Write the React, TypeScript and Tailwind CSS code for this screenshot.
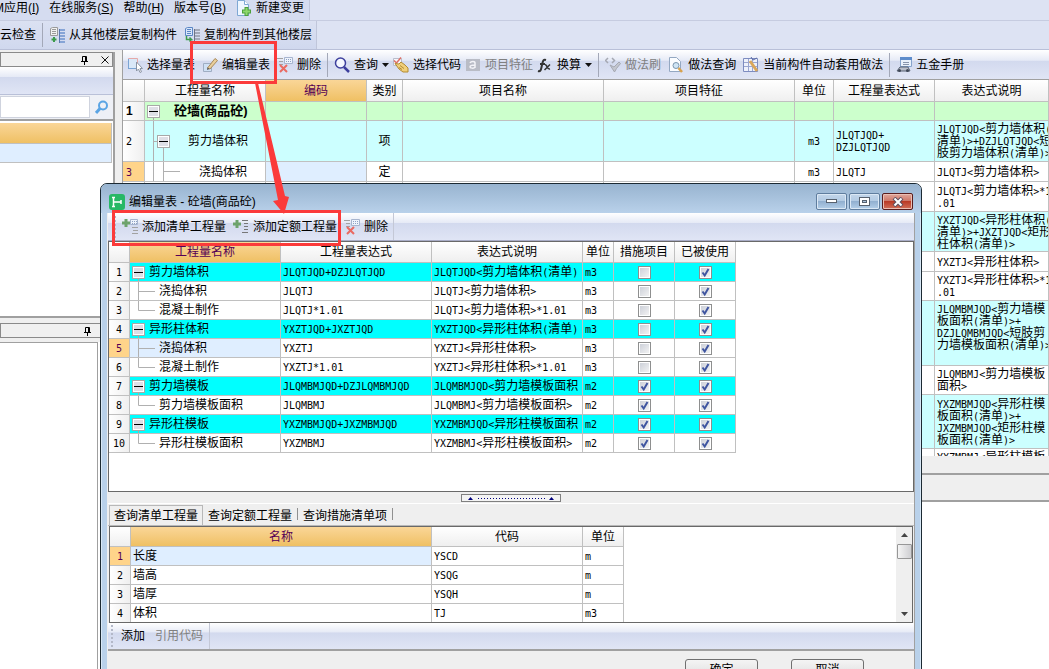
import { Fragment, useState } from 'react'
import type { ReactNode } from 'react'

type Level = 'parent' | 'child' | 'last'

const tableRows: {
  name: string
  level: Level
  code: string
  note: string
  unit: string
  measure: boolean
}[] = [
  { name: '剪力墙体积', level: 'parent', code: 'JLQTJQD+DZJLQTJQD', note: 'JLQTJQD<剪力墙体积(清单)', unit: 'm3', measure: false },
  { name: '浇捣体积', level: 'child', code: 'JLQTJ', note: 'JLQTJ<剪力墙体积>', unit: 'm3', measure: false },
  { name: '混凝土制作', level: 'last', code: 'JLQTJ*1.01', note: 'JLQTJ<剪力墙体积>*1.01', unit: 'm3', measure: false },
  { name: '异形柱体积', level: 'parent', code: 'YXZTJQD+JXZTJQD', note: 'YXZTJQD<异形柱体积(清单)', unit: 'm3', measure: false },
  { name: '浇捣体积', level: 'child', code: 'YXZTJ', note: 'YXZTJ<异形柱体积>', unit: 'm3', measure: false },
  { name: '混凝土制作', level: 'last', code: 'YXZTJ*1.01', note: 'YXZTJ<异形柱体积>*1.01', unit: 'm3', measure: false },
  { name: '剪力墙模板', level: 'parent', code: 'JLQMBMJQD+DZJLQMBMJQD', note: 'JLQMBMJQD<剪力墙模板面积', unit: 'm2', measure: true },
  { name: '剪力墙模板面积', level: 'last', code: 'JLQMBMJ', note: 'JLQMBMJ<剪力墙模板面积>', unit: 'm2', measure: true },
  { name: '异形柱模板', level: 'parent', code: 'YXZMBMJQD+JXZMBMJQD', note: 'YXZMBMJQD<异形柱模板面积', unit: 'm2', measure: true },
  { name: '异形柱模板面积', level: 'last', code: 'YXZMBMJ', note: 'YXZMBMJ<异形柱模板面积>', unit: 'm2', measure: true },
]

// 弹窗遮住的行只保留底色和表达式说明
const restRows = [
  { note: 'JLQTJ<剪力墙体积>*1\n.01', style: 'h-[30px] bg-white' },
  { note: 'YXZTJQD<异形柱体积(\n清单)>+JXZTJQD<矩形\n柱体积(清单)>', style: 'h-[40px] bg-[#ccffff]' },
  { note: 'YXZTJ<异形柱体积>', style: 'h-[20px] bg-white' },
  { note: 'YXZTJ<异形柱体积>*1\n.01', style: 'h-[29px] bg-white' },
  { note: 'JLQMBMJQD<剪力墙模\n板面积(清单)>+\nDZJLQMBMJQD<短肢剪\n力墙模板面积(清单)>\n ', style: 'h-[65px] bg-[#ccffff]' },
  { note: 'JLQMBMJ<剪力墙模板\n面积>', style: 'h-[29px] bg-white' },
  { note: 'YXZMBMJQD<异形柱模\n板面积(清单)>+\nJXZMBMJQD<矩形柱模\n板面积(清单)>', style: 'h-[54px] bg-[#ccffff]' },
  { note: 'YXZMBMJ<异形柱模板\n面积>', style: 'h-[29px] bg-white' },
]

const queryRows = [
  ['长度', 'YSCD', 'm'],
  ['墙高', 'YSQG', 'm'],
  ['墙厚', 'YSQH', 'm'],
  ['体积', 'TJ', 'm3'],
]

const cell = 'border-r border-b border-[#c0c0c0] p-0 overflow-hidden whitespace-nowrap'
const head = `${cell} bg-linear-to-b from-white to-[#efefef] text-center font-normal`
const headActive = `${cell} bg-linear-to-b from-[#fad697] to-[#efc063] text-center font-normal text-[#550055]`
const rowNo = 'bg-linear-to-r from-white to-[#efefef]'
const barSplit =
  'bg-[linear-gradient(to_bottom,#ffffff_0%,#e6eaf6_36%,#d2d9ee_37%,#e0e5f5_100%)]'

// 中文 12px，英文字符半宽
function Code({ text }: { text: string }) {
  return (
    <span className="whitespace-pre">
      {text.split(/([\x20-\x7e]+)/).map((part, i) =>
        i % 2 ? (
          <span key={i} className="font-['DejaVu_Sans_Mono',monospace] text-[10px] leading-[8px]">
            {part}
          </span>
        ) : (
          <Fragment key={i}>{part}</Fragment>
        ),
      )}
    </span>
  )
}

function MinusBox({ x, y }: { x: number; y: number }) {
  return (
    <g>
      <rect x={x + 0.5} y={y + 0.5} width="12" height="12" fill="#fff" stroke="#a8a8a8" />
      <rect x={x + 2} y={y + 2} width="9" height="9" fill="#dedfe6" />
      <path d={`M${x + 2} ${y + 6.5}h9`} stroke="#000" />
    </g>
  )
}

function TreeMark({ level }: { level: Level }) {
  if (level === 'parent') {
    return (
      <svg width="15" height="18" className="shrink-0">
        <path d="M8.5 15v3" stroke="#a8a8a8" />
        <MinusBox x={2} y={3} />
      </svg>
    )
  }
  return (
    <svg width="25" height="18" className="shrink-0" fill="none" stroke="#b0b0b0">
      <path d={level === 'last' ? 'M8.5 0V9.5H25' : 'M8.5 0V18M8.5 9.5H25'} />
    </svg>
  )
}

function CheckBox({ checked, label }: { checked: boolean; label: string }) {
  const [on, setOn] = useState(checked)
  return (
    <span className="grid place-items-center">
      <input
        type="checkbox"
        aria-label={label}
        checked={on}
        onChange={() => setOn(!on)}
        className="col-start-1 row-start-1 size-[13px] appearance-none border border-[#8e8f8f] bg-linear-to-br from-[#c9cdd6] to-[#f6f6f6] shadow-[inset_0_0_0_1px_#fff]"
      />
      {on && (
        <svg width="13" height="13" className="pointer-events-none col-start-1 row-start-1" fill="none">
          <path d="M3.5 6.5l2.2 3L9.5 3" stroke="#3f55a0" strokeWidth="2" />
        </svg>
      )}
    </span>
  )
}

function Ico({ children }: { children: ReactNode }) {
  return (
    <svg width="16" height="16" viewBox="0 0 16 16" fill="none" className="shrink-0">
      {children}
    </svg>
  )
}

function ToolButton({ icon, label, disabled, caret }: { icon?: ReactNode; label: string; disabled?: boolean; caret?: boolean }) {
  return (
    <button type="button" disabled={disabled} className="flex shrink-0 items-center gap-1 whitespace-nowrap disabled:text-[#808080]">
      {icon}
      {label}
      {caret && (
        <svg width="7" height="4">
          <path d="M0 0h7L3.5 4z" fill="#111" />
        </svg>
      )}
    </button>
  )
}

const Divider = () => <span className="mx-[6px] h-6 w-px shrink-0 bg-[#a3a8b8]" />

const grip = (
  <svg width="2" height="22" className="shrink-0">
    <path d="M1 0v22" stroke="#b3b8c8" strokeWidth="2" strokeDasharray="2 2" />
  </svg>
)

const icons = {
  newDoc: (
    <Ico>
      <path d="M1.500 .5h7l4 4v11h-11z" fill="#eef6ff" stroke="#7fa8d4" />
      <path d="M8.500 .5v4h4" fill="#fff" stroke="#7fa8d4" />
      <path d="M10.500 7v9M6 11.500h9" stroke="#4da03c" strokeWidth="4" />
      <path d="M10.500 8v7M7 11.500h7" stroke="#8ed86c" strokeWidth="2" />
    </Ico>
  ),
  copyFrom: (
    <Ico>
      <path d="M1.500 1.500l2-1h5v8h-7z" fill="#f1f1f1" stroke="#9a9a9a" />
      <path d="M3 2.500h4M3 4.500h4M3 6.500h4" stroke="#9a9a9a" />
      <path d="M5 10v5M2.500 12.500h5" stroke="#3c9b4c" strokeWidth="2" />
      <path d="M11 3h5M11 6h5M11 9h5M11 12h5M11 15h5" stroke="#86a4d6" strokeWidth="2" />
      <path d="M10.500 2v14" stroke="#5b78ad" />
    </Ico>
  ),
  copyTo: (
    <Ico>
      <path d="M1.500 1.500l2-1h5v8h-7z" fill="#d8e6fa" stroke="#5b86c4" />
      <path d="M3 2.500h4M3 4.500h4M3 6.500h4" stroke="#5b86c4" />
      <path d="M2.500 9v3.500h5l-2-2m2 2l-2 2" stroke="#3c9b4c" strokeWidth="1.500" />
      <path d="M11 3h5M11 6h5M11 9h5M11 12h5M11 15h5" stroke="#a3a9b8" strokeWidth="2" />
      <path d="M10.500 2v14" stroke="#6d7488" />
    </Ico>
  ),
  pick: (
    <Ico>
      <path d="M1.500 1.500h9v10h-9z" fill="#d9e8f8" stroke="#e5a9a9" />
      <path d="M1 11.500h9M1.500 2v9" stroke="#7ba4d4" />
      <path d="M9.500 5v9l2-2 1.500 3.500 1.500-.7-1.500-3.300h2.500z" fill="#fff" stroke="#8a94a4" />
    </Ico>
  ),
  edit: (
    <Ico>
      <path d="M1.500 6.500h8v8h-8z" fill="#cfe0f4" stroke="#9fadc2" />
      <path d="M5.500 11L13 1.500l2.500 2L8 12z" fill="#e9cf9c" stroke="#a98a5c" />
      <path d="M5.500 10.500l-.5 2.500 2.500-1z" fill="#555" />
    </Ico>
  ),
  remove: (
    <Ico>
      <path d="M0 1.500h6M2 4.500h4M2 7.500h4" stroke="#a2a2a2" />
      <path d="M7.500 .5h8v6h-8z" fill="#eef3fb" stroke="#a7b5cf" />
      <path d="M9 2.500h5M9 4.500h5" stroke="#8fa1c4" strokeDasharray="1 1" />
      <path d="M3 8l7 7M10 8l-7 7" stroke="#ea6a62" strokeWidth="2" />
    </Ico>
  ),
  search: (
    <Ico>
      <circle cx="6.500" cy="6" r="5" fill="#f5f8ff" stroke="#3d3f9d" strokeWidth="1.500" />
      <path d="M10 10l5 5" stroke="#3d3f9d" strokeWidth="2.500" />
    </Ico>
  ),
  code: (
    <Ico>
      <path d="M.5 1.500h8v7h-8z" fill="#f5f5fa" stroke="#b9bccb" />
      <path d="M1 3.500l2.500 2.500L8 .5" stroke="#dd6f66" strokeWidth="1.500" />
      <path d="M2 6.500l4 .5 2-2 4 3 3 3v4h-5L6 12z" fill="#f0cf79" stroke="#b38b35" />
      <path d="M7 8.500l4 3M6 10.500l3 2" stroke="#b38b35" />
    </Ico>
  ),
  feature: (
    <Ico>
      <path d="M1 2h14v12H1z" fill="#b9bcc6" />
      <path d="M5 6c1-2 5-2 5 0v5M10 8c-4 0-5 1-5 2s4 2 5 0" stroke="#f4f4f8" strokeWidth="1.500" />
    </Ico>
  ),
  fx: (
    <Ico>
      <path d="M1 14c3 1 3-2 4-6s1-6 4-5M3 7h5" stroke="#333" strokeWidth="2" />
      <path d="M8 8c2-1 2 5 5 4M13 7.500L7.500 13" stroke="#333" strokeWidth="1.500" />
    </Ico>
  ),
  brush: (
    <Ico>
      <path d="M3 1L.5 3.500 3 6M7 1l2.500 2.500L7 6" stroke="#a5a8b2" strokeWidth="1.500" />
      <path d="M5 8l4 2 5-5 1.500 1.500-4 5-2 3.500z" fill="#c3c6ce" stroke="#a5a8b2" />
    </Ico>
  ),
  docSearch: (
    <Ico>
      <path d="M1.500 .5h7l4 4v10h-11z" fill="#fafcff" stroke="#94a8c2" />
      <circle cx="8" cy="8.500" r="3" fill="#cfe5f5" stroke="#7a95ae" />
      <path d="M10.500 11l3.500 4" stroke="#d8a24e" strokeWidth="2.500" />
    </Ico>
  ),
  auto: (
    <Ico>
      <path d="M.5 1.500h14v13H.5z" fill="#eef1fb" stroke="#7d8cc0" />
      <path d="M1 5.500h13M1 9.500h13M5.500 2v12M9.500 2v12" stroke="#9aa6d0" />
      <path d="M7 4l7 10" stroke="#d9a75b" strokeWidth="3" />
      <path d="M8 0l2 3 4-2" stroke="#5c6ba6" />
    </Ico>
  ),
  manual: (
    <Ico>
      <path d="M4.500 .5h11v9h-11z" fill="#e9f1fb" stroke="#86a3cc" />
      <path d="M4 1.500h12" stroke="#5d8ccb" strokeWidth="3" />
      <path d="M7 5.500h6M7 7.500h6" stroke="#8794ab" />
      <path d="M1 14l3-4h8l2 4z" fill="#b9bec9" stroke="#566072" />
      <circle cx="3.500" cy="13.500" r="1.500" fill="#3e4656" />
      <circle cx="11.500" cy="13.500" r="1.500" fill="#3e4656" />
    </Ico>
  ),
  addList: (
    <Ico>
      <path d="M8.500 .5h7v5h-7z" fill="#eef3fb" stroke="#a7b5cf" />
      <path d="M10 2.500h5M10 4.500h5" stroke="#8fa1c4" strokeDasharray="1 1" />
      <path d="M10 8.500h6M11 11.500h5M10 14.500h6" stroke="#a2a2a2" />
      <path d="M4 0v8M0 4h8" stroke="#6da36c" strokeWidth="3" />
    </Ico>
  ),
  addQuota: (
    <Ico>
      <path d="M9 1.500h6M11 4.500h4M11 7.500h4M11 10.500h4M9 13.500h6" stroke="#777" />
      <path d="M4 1v8M0 5h8" stroke="#6da36c" strokeWidth="3" />
    </Ico>
  ),
}

function Pin() {
  return (
    <svg width="9" height="10" fill="none" stroke="#000">
      <path d="M2.500 6V1.500h4V6M5.500 1.500V6M1 6.500h7M4.500 7v3" />
    </svg>
  )
}

function MenuItem({ label, hot }: { label: string; hot: string }) {
  return (
    <button type="button" className="shrink-0 whitespace-nowrap">
      {label}(<u>{hot}</u>)
    </button>
  )
}

function LeftDock() {
  return (
    <aside className="flex w-[115px] shrink-0 flex-col pt-[2px]">
      <div className="flex min-h-0 flex-1 flex-col border-r-2 border-[#a0a0a0]">
        <div className="flex h-[15px] shrink-0 items-center justify-end gap-[12px] border border-[#8a8a8a] bg-[#f0f0f0] pr-[3px]">
          <Pin />
          <button type="button" aria-label="关闭" className="grid place-items-center">
            <svg width="8" height="8" stroke="#111">
              <path d="M.5 .5l7 7M7.500 .5l-7 7" />
            </svg>
          </button>
        </div>
        <div className={`h-7 shrink-0 border-b border-[#b9c0d8] ${barSplit}`} />
        <div className="flex h-[26px] shrink-0 items-center border-b-2 border-[#a0a0a0] bg-[#eef0f6]">
          <input type="text" aria-label="搜索构件" className="h-[22px] w-[90px] border border-[#cfd3de] bg-white px-1 outline-none" />
          <button type="button" aria-label="搜索" className="ml-[5px]">
            <svg width="14" height="14" fill="none" stroke="#5aa4e4">
              <circle cx="8" cy="5.500" r="4" strokeWidth="2" />
              <path d="M5 8.500L1 13" strokeWidth="3" />
            </svg>
          </button>
        </div>
        <div className="min-h-0 flex-1 bg-white pr-[1px] pt-[2px]">
          <div className="h-[21px] border-r border-b border-[#c0c0c0] bg-linear-to-b from-[#fad697] to-[#efc063]" />
          <div className="h-[19px] border-r border-b border-[#c0c0c0] bg-[#dfeeff]" />
        </div>
      </div>
      <div className="flex h-[353px] shrink-0 flex-col border-t-2 border-[#a0a0a0] pt-[5px]">
        <div className="flex h-[15px] shrink-0 items-center border border-[#8a8a8a] bg-[#f0f0f0] pl-[82px]">
          <Pin />
        </div>
        <div className="mt-[4px] flex-1 bg-white">
          <div className="h-full w-[98px] border-r border-t border-[#a0a0a0]" />
        </div>
      </div>
    </aside>
  )
}

function MainTable() {
  return (
    <table className="w-full table-fixed border-separate border-spacing-0 bg-white leading-3">
      <colgroup>
        <col className="w-[22px]" />
        <col className="w-[121px]" />
        <col className="w-[101px]" />
        <col className="w-[36px]" />
        <col className="w-[201px]" />
        <col className="w-[191px]" />
        <col className="w-[39px]" />
        <col className="w-[101px]" />
        <col />
      </colgroup>
      <thead>
        <tr className="h-[22px]">
          <th className={head} />
          <th className={head}>工程量名称</th>
          <th className={headActive}>编码</th>
          {['类别', '项目名称', '项目特征', '单位', '工程量表达式', '表达式说明'].map((t) => (
            <th key={t} className={head}>
              {t}
            </th>
          ))}
        </tr>
      </thead>
      <tbody>
        <tr className="h-[19px] bg-[#ccffcc]">
          <td className={`${cell} ${rowNo} pl-[3px] font-bold`}>1</td>
          <td className={cell}>
            <div className="flex items-center gap-[11px] text-[13px] font-bold">
              <svg width="18" height="18" className="shrink-0">
                <path d="M8.500 15v3" stroke="#a8a8a8" />
                <MinusBox x={2} y={3} />
              </svg>
              砼墙(商品砼)
            </div>
          </td>
          {[0, 1, 2, 3, 4, 5, 6].map((i) => (
            <td key={i} className={cell} />
          ))}
        </tr>
        <tr className="h-[41px] bg-[#ccffff]">
          <td className={`${cell} ${rowNo} pl-[3px]`}>
            <Code text="2" />
          </td>
          <td className={cell}>
            <div className="flex items-center gap-[17px]">
              <svg width="26" height="40" className="shrink-0">
                <path d="M8.500 0v40M8.500 20.500h4M18.500 27v13" stroke="#b0b0b0" />
                <MinusBox x={12} y={14} />
              </svg>
              剪力墙体积
            </div>
          </td>
          <td className={cell} />
          <td className={`${cell} text-center`}>项</td>
          <td className={cell} />
          <td className={cell} />
          <td className={`${cell} text-center`}>
            <Code text="m3" />
          </td>
          <td className={`${cell} pl-[2px]`}>
            <Code text={'JLQTJQD+\nDZJLQTJQD'} />
          </td>
          <td className={`${cell} pl-[2px]`}>
            <Code text={'JLQTJQD<剪力墙体积(\n清单)>+DZJLQTJQD<短\n肢剪力墙体积(清单)>'} />
          </td>
        </tr>
        <tr className="h-[20px]">
          <td className={`${cell} bg-[#ffd48a] pl-[3px] text-[#550055]`}>
            <Code text="3" />
          </td>
          <td className={cell}>
            <div className="flex items-center gap-[18px]">
              <svg width="36" height="19" className="shrink-0">
                <path d="M8.500 0v19M18.500 0v19M18.500 9.500H35" stroke="#b0b0b0" fill="none" />
              </svg>
              浇捣体积
            </div>
          </td>
          <td className={`${cell} bg-[#dfeeff]`} />
          <td className={`${cell} text-center`}>定</td>
          <td className={cell} />
          <td className={cell} />
          <td className={`${cell} text-center`}>
            <Code text="m3" />
          </td>
          <td className={`${cell} pl-[2px]`}>
            <Code text="JLQTJ" />
          </td>
          <td className={`${cell} pl-[2px]`}>
            <Code text="JLQTJ<剪力墙体积>" />
          </td>
        </tr>
        {restRows.map((row) => (
          <tr key={row.note} className={row.style}>
            {[0, 1, 2, 3, 4, 5, 6, 7].map((i) => (
              <td key={i} className={cell} />
            ))}
            <td className={`${cell} pl-[2px]`}>
              <Code text={row.note} />
            </td>
          </tr>
        ))}
      </tbody>
    </table>
  )
}

function EditTable() {
  return (
    <table className="w-[627px] table-fixed border-separate border-spacing-0 leading-[14px]">
      <colgroup>
        <col className="w-[21px]" />
        <col className="w-[151px]" />
        <col className="w-[151px]" />
        <col className="w-[151px]" />
        <col className="w-[31px]" />
        <col className="w-[61px]" />
        <col className="w-[61px]" />
      </colgroup>
      <thead>
        <tr className="h-[21px]">
          <th className={head} />
          <th className={headActive}>工程量名称</th>
          {['工程量表达式', '表达式说明', '单位', '措施项目', '已被使用'].map((t) => (
            <th key={t} className={head}>
              {t}
            </th>
          ))}
        </tr>
      </thead>
      <tbody>
        {tableRows.map((row, i) => (
          <tr key={i} className={row.level === 'parent' ? 'h-[19px] bg-[#00ffff]' : 'h-[19px]'}>
            <td className={`${cell} text-center ${i === 4 ? 'bg-[#ffd48a] text-[#550055]' : rowNo}`}>
              <Code text={String(i + 1)} />
            </td>
            <td className={`${cell} ${i === 4 ? 'bg-[#dfeeff]' : ''}`}>
              <div className="flex items-center gap-1">
                <TreeMark level={row.level} />
                {row.name}
              </div>
            </td>
            <td className={`${cell} pl-[2px]`}>
              <Code text={row.code} />
            </td>
            <td className={`${cell} pl-[2px]`}>
              <Code text={row.note} />
            </td>
            <td className={`${cell} pl-[2px]`}>
              <Code text={row.unit} />
            </td>
            <td className={cell}>
              <CheckBox checked={row.measure} label={`${row.name} 措施项目`} />
            </td>
            <td className={cell}>
              <CheckBox checked label={`${row.name} 已被使用`} />
            </td>
          </tr>
        ))}
      </tbody>
    </table>
  )
}

function QueryTable() {
  return (
    <table className="w-[514px] table-fixed border-separate border-spacing-0 leading-[14px]">
      <colgroup>
        <col className="w-[21px]" />
        <col className="w-[301px]" />
        <col className="w-[151px]" />
        <col className="w-[41px]" />
      </colgroup>
      <thead>
        <tr className="h-[20px]">
          <th className={head} />
          <th className={headActive}>名称</th>
          <th className={head}>代码</th>
          <th className={head}>单位</th>
        </tr>
      </thead>
      <tbody>
        {queryRows.map(([name, code, unit], i) => (
          <tr key={code} className="h-[19px]">
            <td className={`${cell} text-center ${i === 0 ? 'bg-[#ffd48a] text-[#550055]' : rowNo}`}>
              <Code text={String(i + 1)} />
            </td>
            <td className={`${cell} pl-[2px] ${i === 0 ? 'bg-[#dfeeff]' : ''}`}>{name}</td>
            <td className={`${cell} pl-[2px]`}>
              <Code text={code} />
            </td>
            <td className={`${cell} pl-[2px]`}>
              <Code text={unit} />
            </td>
          </tr>
        ))}
      </tbody>
    </table>
  )
}

const winButton =
  'grid h-[17px] w-[31px] place-items-center rounded-[2px] border border-[#5f7d9e] bg-[linear-gradient(to_bottom,#c3d6ea_0%,#b2cae3_48%,#92b0d0_50%,#b4cfe9_100%)] shadow-[inset_0_0_0_1px_#dbe8f5]'

function EditDialog() {
  return (
    <div
      role="dialog"
      aria-label="编辑量表"
      className="absolute top-[183px] right-[127px] left-[100px] rounded-t-[7px] border border-[#1c2a33] bg-[#b9d1ea] px-[6px] shadow-[inset_0_0_0_1px_#d8e8f6]"
    >
      <div className="-mx-[6px] flex h-[29px] items-center rounded-t-[6px] bg-linear-to-b from-[#98b4d0] to-[#b9d1ea] pt-[6px] pr-[8px] pl-[8px]">
        <svg width="16" height="16" fill="none">
          <rect width="16" height="16" rx="3" fill="#27b866" />
          <path d="M4.500 3v10M4.500 8H12M12 6v4M3 3.500h3M3 12.500h3" stroke="#fff" strokeWidth="1.500" />
        </svg>
        <span className="ml-[4px] flex-1">编辑量表 - 砼墙(商品砼)</span>
        <div className="flex gap-[2px]">
          <button type="button" aria-label="最小化" className={winButton}>
            <svg width="11" height="5">
              <rect x=".5" y=".5" width="10" height="3" fill="#fff" stroke="#57616e" />
            </svg>
          </button>
          <button type="button" aria-label="最大化" className={winButton}>
            <svg width="11" height="9" fill="none" stroke="#57616e">
              <rect x=".5" y=".5" width="10" height="8" fill="#fff" />
              <rect x="3.500" y="3.500" width="4" height="2" fill="#a8c0da" />
            </svg>
          </button>
          <button
            type="button"
            aria-label="关闭"
            className="grid h-[17px] w-[31px] place-items-center rounded-[2px] border border-[#5a1d1d] bg-[linear-gradient(to_bottom,#e0a79b_0%,#cd7565_48%,#b93a26_50%,#d2705a_100%)] shadow-[inset_0_0_0_1px_#eabfb4]"
          >
            <svg width="12" height="10">
              <path d="M2 1l8 8M10 1L2 9" stroke="#5c5060" strokeWidth="4" />
              <path d="M2.500 1.500l7 7M9.500 1.500l-7 7" stroke="#fff" strokeWidth="2" />
            </svg>
          </button>
        </div>
      </div>

      <div className="border-r border-[#a0a0a0] bg-[#efefef] pl-px">
        <div className={`flex h-7 items-center border-b border-[#a8acc6] pl-[6px] ${barSplit}`}>
          {grip}
          <div className="ml-[6px] flex h-full items-center gap-[7px] border-r border-[#c4c8d6] pr-[5px]">
            <ToolButton icon={icons.addList} label="添加清单工程量" />
            <ToolButton icon={icons.addQuota} label="添加定额工程量" />
            <ToolButton icon={icons.remove} label="删除" />
          </div>
        </div>
        <div className="h-[251px] border border-[#696969] bg-white">
          <EditTable />
        </div>

        <div className="flex h-[12px] items-center justify-center border-b border-white">
          <svg width="100" height="8" fill="none">
            <rect x=".5" y=".5" width="99" height="7" fill="#f4f4f4" stroke="#808080" />
            <path d="M7 6l2.500-3L12 6zM88 6l2.500-3L93 6z" fill="#00007b" />
            <path d="M17 4.500h68" stroke="#00007b" strokeDasharray="1 2" />
          </svg>
        </div>

        <div role="tablist" className="flex h-[22px] items-end border-b border-[#b8b8b8] pl-px">
          <button type="button" role="tab" aria-selected="true" className="h-[20px] border-t border-r border-l border-[#b8b8b8] px-[4px]">
            查询清单工程量
          </button>
          <button type="button" role="tab" aria-selected="false" className="h-[18px] px-[5px]">
            查询定额工程量
          </button>
          <span className="mb-[5px] h-3 w-px bg-[#909090]" />
          <button type="button" role="tab" aria-selected="false" className="h-[18px] px-[5px]">
            查询措施清单项
          </button>
          <span className="mb-[5px] h-3 w-px bg-[#909090]" />
        </div>

        <div className="mx-px flex h-[97px] overflow-hidden border border-[#696969] bg-white">
          <div className="flex-1">
            <QueryTable />
          </div>
          <div className="flex w-[16px] flex-col items-center bg-[#efefef] py-[6px]">
            <svg width="7" height="4">
              <path d="M0 4L3.500 0 7 4z" fill="#444" />
            </svg>
            <span className="mt-[7px] h-[15px] w-[15px] rounded-[1px] border border-[#979797] bg-linear-to-r from-[#f5f5f5] to-[#cfcfd2]" />
            <svg width="7" height="4" className="mt-auto">
              <path d="M0 0h7L3.500 4z" fill="#444" />
            </svg>
          </div>
        </div>

        <div className={`flex h-7 items-center border-b-2 border-[#a0a0a0] pl-[3px] ${barSplit}`}>
          {grip}
          <div className="ml-[8px] flex h-full items-center gap-[10px] border-r border-[#c4c8d6] pr-[6px]">
            <ToolButton label="添加" />
            <ToolButton label="引用代码" disabled />
          </div>
        </div>

        <div className="flex justify-end gap-[33px] pt-[8px] pr-[50px] pb-2">
          <button type="button" className="h-[22px] w-[73px] rounded-[3px] border border-[#707070] bg-linear-to-b from-[#f4f4f4] to-[#dcdcdc]">
            确定
          </button>
          <button type="button" className="h-[22px] w-[73px] rounded-[3px] border border-[#707070] bg-linear-to-b from-[#f4f4f4] to-[#dcdcdc]">
            取消
          </button>
        </div>
      </div>
    </div>
  )
}

export default function App() {
  return (
    <div className="relative flex h-screen flex-col overflow-hidden bg-[#efefef] font-['Liberation_Sans','Noto_Sans_CJK_SC',sans-serif] text-[12px] leading-4 text-black">
      <div className="flex h-[21px] shrink-0 border-b border-[#c6cce0] bg-[#dde3f3]">
        <nav className="-ml-[6px] flex items-center gap-[10px] border-r border-[#c0c6da] bg-[#d5dcf0] pr-[5px] pb-[4px]">
          <MenuItem label="M应用" hot="I" />
          <MenuItem label="在线服务" hot="S" />
          <MenuItem label="帮助" hot="H" />
          <MenuItem label="版本号" hot="B" />
          <ToolButton icon={icons.newDoc} label="新建变更" />
        </nav>
      </div>
      <div className="flex h-[29px] shrink-0 border-b border-[#b9c0d8] bg-[#dde3f3]">
        <div className="flex items-center border-r border-[#c0c6da] bg-linear-to-b from-[#dbe1f2] to-[#d0d8ee] pr-[4px]">
          <ToolButton label="云检查" />
          <Divider />
          <div className="flex items-center gap-[7px]">
            <ToolButton icon={icons.copyFrom} label="从其他楼层复制构件" />
            <ToolButton icon={icons.copyTo} label="复制构件到其他楼层" />
          </div>
        </div>
      </div>

      <div className="flex min-h-0 flex-1">
        <LeftDock />
        <main className="ml-[7px] flex min-w-0 flex-1 flex-col border-l border-[#a0a0a0]">
          <div className={`flex h-[30px] shrink-0 items-center border-b border-[#a0a0a0] pl-[4px] ${barSplit}`}>
            <div className="flex items-center gap-[7px]">
              <ToolButton icon={icons.pick} label="选择量表" />
              <ToolButton icon={icons.edit} label="编辑量表" />
              <ToolButton icon={icons.remove} label="删除" />
            </div>
            <Divider />
            <div className="flex items-center gap-1">
              <ToolButton icon={icons.search} label="查询" caret />
              <ToolButton icon={icons.code} label="选择代码" />
              <ToolButton icon={icons.feature} label="项目特征" disabled />
              <ToolButton icon={icons.fx} label="换算" caret />
            </div>
            <Divider />
            <div className="flex items-center gap-[7px]">
              <ToolButton icon={icons.brush} label="做法刷" disabled />
              <ToolButton icon={icons.docSearch} label="做法查询" />
              <ToolButton icon={icons.auto} label="当前构件自动套用做法" />
            </div>
            <Divider />
            <ToolButton icon={icons.manual} label="五金手册" />
          </div>
          <div className="min-h-0 flex-1 overflow-hidden bg-white">
            <MainTable />
          </div>
          <div className="flex h-[213px] shrink-0 flex-col">
            <div className="h-[19px] border-b-2 border-[#a0a0a0]" />
            <div className="h-[27px] border-b-2 border-[#a0a0a0]" />
            <div className="flex-1 bg-white" />
          </div>
        </main>
      </div>

      <EditDialog />

      {/* 红框标注和箭头 */}
      <div className="pointer-events-none absolute top-[41px] left-[190px] h-[43px] w-[87px] border-[3px] border-[#fb3a3a]" />
      <div className="pointer-events-none absolute top-[210px] left-[112px] h-[36px] w-[229px] border-[3px] border-[#fb3a3a]" />
      <svg width="40" height="132" className="pointer-events-none absolute top-[83px] left-[253px]">
        <path d="M2 0h3l27 113 4 1-5 17-11-13 5-1z" fill="#fb3a3a" />
      </svg>
    </div>
  )
}
